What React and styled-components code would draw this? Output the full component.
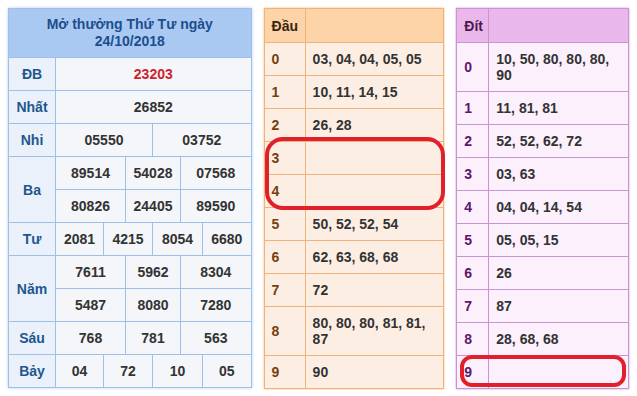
import React from 'react'
import styled, { createGlobalStyle } from 'styled-components'

const Global = createGlobalStyle`
  body {
    margin: 0;
    background: #fff;
    font-family: "Liberation Sans", Arial, sans-serif;
  }
`

const Page = styled.div`
  position: relative;
  display: flex;
  align-items: flex-start;
  gap: 12px;
  padding: 8px;
  width: 637px;
  height: 396px;
  box-sizing: border-box;
`

// bảng kết quả
const Board = styled.div`
  width: 244px;
  box-sizing: border-box;
  display: grid;
  grid-template-columns: 46px 47px 21px 26px 27px 21px 1fr;
  grid-template-rows: 48px repeat(10, 32px);
  gap: 1px;
  padding: 1px;
  background: #9ebfe8;
  box-shadow: 0 0 3px rgba(90, 150, 220, 0.45);
`

const Title = styled.div`
  grid-column: 1 / -1;
  background: #a9c9f2;
  color: #1d4e8c;
  font-size: 14px;
  font-weight: bold;
  line-height: 17px;
  display: flex;
  flex-direction: column;
  align-items: center;
  justify-content: center;
`

const Label = styled.div`
  grid-column: 1;
  grid-row: span ${p => p.rows || 1};
  background: #eaf1fa;
  color: #1f568f;
  font-size: 14px;
  font-weight: bold;
  display: flex;
  align-items: center;
  justify-content: center;
`

const Num = styled.div`
  grid-column: span ${p => p.span};
  background: #f4f6f9;
  color: ${p => (p.special ? '#d0202e' : '#333')};
  font-size: 14px;
  font-weight: bold;
  display: flex;
  align-items: center;
  justify-content: center;
`

// bảng đầu / đít
const Loto = styled.div`
  width: ${p => p.w}px;
  box-sizing: border-box;
  display: grid;
  grid-template-columns: ${p => p.first}px 1fr;
  gap: 1px;
  padding: 1px;
  background: ${p => p.line};
  box-shadow: 0 0 2px ${p => p.line};
`

const Head = styled.div`
  background: ${p => p.bg};
  color: ${p => p.color};
  height: 33px;
  font-size: 14px;
  font-weight: bold;
  display: flex;
  align-items: center;
  padding: 0 7px;
`

const Digit = styled.div`
  background: ${p => p.bg};
  color: ${p => p.color};
  font-size: 14px;
  font-weight: bold;
  line-height: 16px;
  padding: 8px 7px;
  display: flex;
  align-items: center;
`

const Cell = styled.div`
  background: ${p => p.bg};
  color: #333;
  font-size: 14px;
  font-weight: bold;
  line-height: 16px;
  padding: 8px 7px;
  min-height: 16px;
  display: flex;
  align-items: center;
`

const Mark = styled.div`
  position: absolute;
  left: ${p => p.x}px;
  top: ${p => p.y}px;
  width: ${p => p.w}px;
  height: ${p => p.h}px;
  box-sizing: border-box;
  border: 4px solid #e0202b;
  border-radius: ${p => p.r}px;
`

const prizes = [
  { name: 'ĐB', rows: [[['23203', 6]]], special: true },
  { name: 'Nhất', rows: [[['26852', 6]]] },
  { name: 'Nhi', rows: [[['05550', 3], ['03752', 3]]] },
  { name: 'Ba', rows: [[['89514', 2], ['54028', 2], ['07568', 2]], [['80826', 2], ['24405', 2], ['89590', 2]]] },
  { name: 'Tư', rows: [[['2081', 1], ['4215', 2], ['8054', 2], ['6680', 1]]] },
  { name: 'Năm', rows: [[['7611', 2], ['5962', 2], ['8304', 2]], [['5487', 2], ['8080', 2], ['7280', 2]]] },
  { name: 'Sáu', rows: [[['768', 2], ['781', 2], ['563', 2]]] },
  { name: 'Bảy', rows: [[['04', 1], ['72', 2], ['10', 2], ['05', 1]]] },
]

const dau = ['03, 04, 04, 05, 05', '10, 11, 14, 15', '26, 28', '', '', '50, 52, 52, 54', '62, 63, 68, 68', '72', '80, 80, 80, 81, 81, 87', '90']
const dit = ['10, 50, 80, 80, 80, 90', '11, 81, 81', '52, 52, 62, 72', '03, 63', '04, 04, 14, 54', '05, 05, 15', '26', '87', '28, 68, 68', '']

const themes = {
  dau: { line: '#f0b37b', head: '#fdd3a8', body: '#fdeee3', title: '#3a2410', digit: '#74400f' },
  dit: { line: '#c994d2', head: '#e9b7ea', body: '#fcf0fc', title: '#4a1a50', digit: '#5c176c' },
}

function LotoTable({ title, list, w, first, t }) {
  return (
    <Loto w={w} first={first} line={t.line}>
      <Head bg={t.head} color={t.title}>{title}</Head>
      <Head bg={t.head} />
      {list.map((v, i) => (
        <React.Fragment key={i}>
          <Digit bg={t.body} color={t.digit}>{i}</Digit>
          <Cell bg={t.body}>{v}</Cell>
        </React.Fragment>
      ))}
    </Loto>
  )
}

export default function App() {
  return (
    <Page>
      <Global />
      <Board>
        <Title>
          <span>Mở thưởng Thứ Tư ngày</span>
          <span>24/10/2018</span>
        </Title>
        {prizes.map(p => (
          <React.Fragment key={p.name}>
            <Label rows={p.rows.length}>{p.name}</Label>
            {p.rows.map((r, ri) =>
              r.map(([n, span], ci) => (
                <Num key={ri + '-' + ci} span={span} special={p.special}>{n}</Num>
              ))
            )}
          </React.Fragment>
        ))}
      </Board>
      <LotoTable title="Đầu" list={dau} w={181} first={40} t={themes.dau} />
      <LotoTable title="Đít" list={dit} w={173} first={31} t={themes.dit} />
      <Mark x={265} y={137} w={180} h={73} r={18} />
      <Mark x={460} y={355} w={166} h={32} r={12} />
    </Page>
  )
}
